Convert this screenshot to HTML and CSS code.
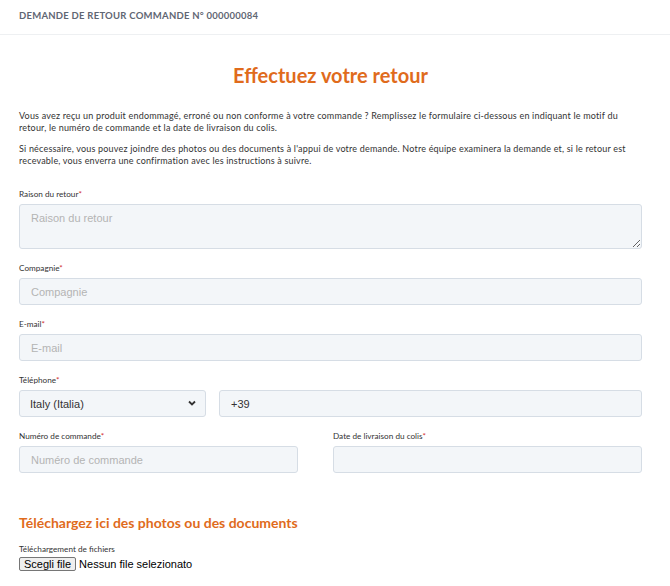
FILE: index.html
```html
<!DOCTYPE html>
<html lang="fr">
<head>
  <meta charset="UTF-8">
  <meta name="viewport" content="width=device-width, initial-scale=1.0">
  <title>Demande de retour</title>
  <link rel="stylesheet" href="styles.css">
</head>
<body>

  <div class="topbar">DEMANDE DE RETOUR COMMANDE N° 000000084</div>

  <div class="container">
    <h1>Effectuez votre retour</h1>

    <p class="intro">Vous avez reçu un produit endommagé, erroné ou non conforme à votre commande ? Remplissez le formulaire ci-dessous en indiquant le motif du retour, le numéro de commande et la date de livraison du colis.</p>
    <p class="intro">Si nécessaire, vous pouvez joindre des photos ou des documents à l'appui de votre demande. Notre équipe examinera la demande et, si le retour est recevable, vous enverra une confirmation avec les instructions à suivre.</p>

    <form id="returnForm">
      <div class="form-group">
        <label for="reason">Raison du retour<span class="req">*</span></label>
        <textarea id="reason" placeholder="Raison du retour"></textarea>
      </div>

      <div class="form-group">
        <label for="company">Compagnie<span class="req">*</span></label>
        <input type="text" id="company" placeholder="Compagnie">
      </div>

      <div class="form-group">
        <label for="email">E-mail<span class="req">*</span></label>
        <input type="text" id="email" placeholder="E-mail">
      </div>

      <div class="form-group">
        <label for="phone">Téléphone<span class="req">*</span></label>
        <div class="phone-row">
          <div class="select-wrap">
            <select id="country">
              <option>Italy (Italia)</option>
            </select>
            <svg class="chevron" width="10" height="10" viewBox="0 0 10 10"><path d="M2 3.5 L5 6.5 L8 3.5" fill="none" stroke="#333" stroke-width="1.8"/></svg>
          </div>
          <input type="text" id="phone" value="+39">
        </div>
      </div>

      <div class="two-cols">
        <div class="form-group">
          <label for="orderNumber">Numéro de commande<span class="req">*</span></label>
          <input type="text" id="orderNumber" placeholder="Numéro de commande">
        </div>
        <div class="form-group">
          <label for="deliveryDate">Date de livraison du colis<span class="req">*</span></label>
          <input type="text" id="deliveryDate">
        </div>
      </div>

      <h2>Téléchargez ici des photos ou des documents</h2>
      <label class="file-label">Téléchargement de fichiers</label>
      <div class="file-row">
        <span class="file-btn">Scegli file</span>
        <span class="file-name">Nessun file selezionato</span>
      </div>
    </form>
  </div>

</body>
</html>
```

FILE: styles.css
```css
body {
  font-family: Lato, "Noto Sans", sans-serif;
  background-color: #fff;
  margin: 0;
  color: #333;
}
.topbar {
  height: 34px;
  line-height: 31px;
  padding-left: 19px;
  font-size: 9.5px;
  font-weight: bold;
  letter-spacing: 0.25px;
  color: #5f6673;
  border-bottom: 1px solid #eef0f2;
}
.container {
  padding: 0 28px 0 19px;
}
h1 {
  text-align: center;
  color: #e06b1c;
  font-size: 20px;
  font-weight: bold;
  margin: 28px 0 23px;
}
.intro {
  font-size: 9px;
  letter-spacing: 0.19px;
  line-height: 12px;
  margin: 0 0 9px;
  color: #333;
}
form {
  margin-top: 22px;
}
.form-group {
  margin-bottom: 14px;
}
label {
  display: block;
  font-size: 8.2px;
  color: #333;
  margin-bottom: 5px;
  height: 10px;
}
.req {
  color: #d32f2f;
}
input[type="text"], textarea, select {
  box-sizing: border-box;
  width: 100%;
  height: 27px;
  padding: 0 11px;
  font-family: "Liberation Sans", Arial, sans-serif;
  font-size: 11px;
  color: #333;
  background-color: #f3f6f9;
  border: 1px solid #d6dde5;
  border-radius: 3px;
  outline: none;
}
textarea {
  height: 45px;
  padding-top: 7px;
  display: block;
}
::placeholder {
  color: #b4b4b4;
}
.phone-row {
  display: grid;
  grid-template-columns: 187px 1fr;
  gap: 13px;
}
.select-wrap {
  position: relative;
}
select {
  appearance: none;
  padding-left: 10px;
}
.chevron {
  position: absolute;
  right: 9px;
  top: 8px;
  pointer-events: none;
}
.two-cols {
  display: grid;
  grid-template-columns: 279px 1fr;
  gap: 35px;
}
h2 {
  color: #e06b1c;
  font-size: 14px;
  font-weight: bold;
  margin: 27px 0 13px;
}
.file-label {
  margin-bottom: 3px;
}
.file-row {
  display: flex;
  align-items: center;
  gap: 3px;
  font-family: "Liberation Sans", Arial, sans-serif;
  font-size: 11px;
  color: #000;
}
.file-btn {
  padding: 0 4px;
  background-color: #efefef;
  border: 1px solid #767676;
  border-radius: 2px;
}
```
